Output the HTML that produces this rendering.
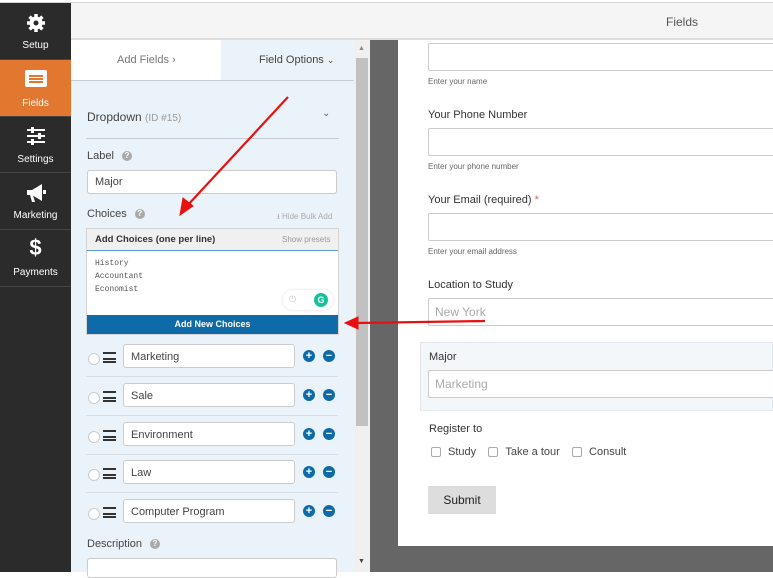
<!DOCTYPE html><html><head><style>
*{box-sizing:border-box;margin:0;padding:0}
body{width:773px;height:572px;overflow:hidden;background:#fff;font-family:"Liberation Sans",sans-serif;position:relative}
.a{position:absolute}
.sb{left:0;top:3px;width:71px;height:569px;background:#2b2b2b}
.si{position:absolute;left:0;width:71px;color:#fff;font-size:10px;text-align:center;border-bottom:1px solid #444}
.lbl{font-size:11px;color:#444}
.inp{position:absolute;background:#fff;border:1px solid #ccc;border-radius:3px;font-size:11px;color:#444;padding-left:7px}
.fl{font-size:11px;color:#333}
.hint{font-size:8px;color:#666}
.fi{position:absolute;left:428px;width:360px;height:28px;background:#fff;border:1px solid #ccc;border-radius:2px}
.q{display:inline-block;width:10px;height:10px;border-radius:50%;background:#aaa;color:#fff;font-size:8px;text-align:center;line-height:10px;font-weight:bold;vertical-align:middle;margin-left:8px}
.row{position:absolute;left:86px;width:252px;height:39px;border-bottom:1px solid #d6dde3}
.rad{position:absolute;left:2px;top:15px;width:12px;height:12px;border:1px solid #ccc;border-radius:50%;background:#fff}
.ham{position:absolute;left:17px;top:14px;width:13px;height:11px;border-top:2px solid #333;border-bottom:2px solid #333}
.ham:after{content:"";position:absolute;left:0;top:3.5px;width:13px;height:2px;background:#333}
.rin{position:absolute;left:37px;top:6px;width:172px;height:24px;background:#fff;border:1px solid #ccc;border-radius:3px;font-size:11px;color:#444;padding:6px 0 0 7px}
.pm{position:absolute;top:12px;width:12px;height:12px;border-radius:50%;background:#0e6ba8;color:#fff;font-size:11px;font-weight:bold;line-height:12px;text-align:center}
.cb{display:inline-block;width:10px;height:10px;border:1px solid #aaa;border-radius:2px;vertical-align:middle;margin-right:7px}
</style></head><body>
<div class="a" style="left:0;top:0;width:773px;height:3px;background:#fff;border-bottom:1px solid #d4d4d4"></div>
<div class="a" style="left:71px;top:3px;width:702px;height:37px;background:#f5f5f5;border-bottom:2px solid #ddd"></div>
<div class="a" style="left:666px;top:15px;font-size:12px;color:#555">Fields</div>
<div class="a sb"></div>
<div class="si" style="top:3px;height:57px"><svg width="20" height="20" viewBox="0 0 20 20" style="margin-top:10px"><circle cx="10" cy="10" r="6.5" fill="#fff"/><g stroke="#fff" stroke-width="3.5"><line x1="10" y1="1" x2="10" y2="19"/><line x1="1" y1="10" x2="19" y2="10"/><line x1="3.6" y1="3.6" x2="16.4" y2="16.4"/><line x1="16.4" y1="3.6" x2="3.6" y2="16.4"/></g><circle cx="10" cy="10" r="2.5" fill="#2b2b2b"/></svg><div style="margin-top:4px">Setup</div></div>
<div class="si" style="top:60px;height:57px;background:#e27730"><div style="margin:10px auto 0;width:22px;height:17px;border:2px solid #fff;border-radius:2px;background:#fff;padding:3px 2px"><div style="height:9px;background:repeating-linear-gradient(#e27730 0 2px,#fff 2px 3px)"></div></div><div style="margin-top:11px">Fields</div></div>
<div class="si" style="top:117px;height:56px"><svg width="20" height="18" style="margin-top:10px"><g fill="#fff"><rect x="1" y="2" width="18" height="2"/><rect x="1" y="8" width="18" height="2"/><rect x="1" y="14" width="18" height="2"/><rect x="5" y="0" width="3" height="6"/><rect x="12" y="6" width="3" height="6"/><rect x="5" y="12" width="3" height="6"/></g></svg><div style="margin-top:6px">Settings</div></div>
<div class="si" style="top:173px;height:57px"><svg width="22" height="20" style="margin-top:10px"><path d="M2 7h5l10-6v17L7 12H2z" fill="#fff"/><path d="M5 12l2 7h3l-2-7z" fill="#fff"/><rect x="18" y="7" width="3" height="4" fill="#fff"/></svg><div style="margin-top:4px">Marketing</div></div>
<div class="si" style="top:230px;height:57px"><div style="font-size:22px;font-weight:bold;margin-top:6px;line-height:24px">$</div><div style="margin-top:7px">Payments</div></div>
<div class="a" style="left:71px;top:40px;width:283px;height:532px;background:#ebf3fa"></div>
<div class="a" style="left:71px;top:40px;width:150px;height:41px;background:#fff;border-bottom:1px solid #c5ccd2"></div>
<div class="a" style="left:221px;top:40px;width:133px;height:41px;border-bottom:1px solid #c5ccd2"></div>
<div class="a" style="left:117px;top:54px;font-size:11px;color:#777">Add Fields &#8250;</div>
<div class="a" style="left:259px;top:54px;font-size:11px;color:#444">Field Options <span style="font-size:9px">&#8964;</span></div>
<div class="a" style="left:354px;top:40px;width:16px;height:532px;background:#f0f0f0"></div>
<div class="a" style="left:356px;top:58px;width:12px;height:368px;background:#c1c1c1"></div>
<div class="a" style="left:358px;top:45px;font-size:7px;color:#888">&#9650;</div>
<div class="a" style="left:358px;top:558px;font-size:7px;color:#444">&#9660;</div>
<div class="a" style="left:87px;top:110px;font-size:12px;color:#444">Dropdown <span style="font-size:10px;color:#999">(ID #15)</span></div>
<div class="a" style="left:322px;top:108px;font-size:10px;color:#666">&#8964;</div>
<div class="a" style="left:86px;top:138px;width:253px;height:1px;background:#c5ccd2"></div>
<div class="a lbl" style="left:87px;top:150px">Label<span class="q">?</span></div>
<div class="inp" style="left:87px;top:170px;width:250px;height:24px;padding-top:5px">Major</div>
<div class="a lbl" style="left:87px;top:208px">Choices<span class="q">?</span></div>
<div class="a" style="left:277px;top:211px;font-size:8px;color:#aaa">&#11123; Hide Bulk Add</div>
<div class="a" style="left:86px;top:228px;width:253px;height:107px;border:1px solid #d4d4d4;background:#f0f0f0"></div>
<div class="a" style="left:95px;top:234px;font-size:9.5px;font-weight:bold;color:#333">Add Choices (one per line)</div>
<div class="a" style="left:282px;top:235px;font-size:8px;color:#999">Show presets</div>
<div class="a" style="left:87px;top:250px;width:251px;height:65px;background:#fff;border-top:1px solid #5b9dd9;font-family:'Liberation Mono',monospace;font-size:8px;color:#555;padding:6px 8px;line-height:13px">History<br>Accountant<br>Economist</div>
<div class="a" style="left:283px;top:290px;width:50px;height:20px;border-radius:10px;background:#fff;box-shadow:0 0 3px #ddd"></div>
<div class="a" style="left:289px;top:294px;font-size:9px;color:#ccc">&#9211;</div>
<div class="a" style="left:314px;top:293px;width:14px;height:14px;border-radius:50%;background:#15c39a;color:#fff;font-size:9px;font-weight:bold;text-align:center;line-height:14px">G</div>
<div class="a" style="left:87px;top:315px;width:251px;height:19px;background:#0e6ba8;color:#fff;font-size:9px;font-weight:bold;text-align:center;line-height:19px">Add New Choices</div>
<div class="row" style="top:338px"><div class="rad"></div><div class="ham"></div><div class="rin">Marketing</div><div class="pm" style="left:217px">+</div><div class="pm" style="left:237px">&#8722;</div></div>
<div class="row" style="top:377px"><div class="rad"></div><div class="ham"></div><div class="rin">Sale</div><div class="pm" style="left:217px">+</div><div class="pm" style="left:237px">&#8722;</div></div>
<div class="row" style="top:416px"><div class="rad"></div><div class="ham"></div><div class="rin">Environment</div><div class="pm" style="left:217px">+</div><div class="pm" style="left:237px">&#8722;</div></div>
<div class="row" style="top:454px"><div class="rad"></div><div class="ham"></div><div class="rin">Law</div><div class="pm" style="left:217px">+</div><div class="pm" style="left:237px">&#8722;</div></div>
<div class="row" style="top:493px;border-bottom:none"><div class="rad"></div><div class="ham"></div><div class="rin">Computer Program</div><div class="pm" style="left:217px">+</div><div class="pm" style="left:237px">&#8722;</div></div>
<div class="a lbl" style="left:87px;top:538px">Description<span class="q">?</span></div>
<div class="inp" style="left:87px;top:558px;width:250px;height:20px"></div>
<div class="a" style="left:370px;top:40px;width:403px;height:532px;background:#666"></div>
<div class="a" style="left:398px;top:40px;width:375px;height:506px;background:#fff"></div>
<div class="fi" style="top:43px"></div>
<div class="a hint" style="left:428px;top:77px">Enter your name</div>
<div class="a fl" style="left:428px;top:109px">Your Phone Number</div>
<div class="fi" style="top:128px"></div>
<div class="a hint" style="left:428px;top:162px">Enter your phone number</div>
<div class="a fl" style="left:428px;top:194px">Your Email (required)<span style="color:#e55"> *</span></div>
<div class="fi" style="top:213px"></div>
<div class="a hint" style="left:428px;top:247px">Enter your email address</div>
<div class="a fl" style="left:428px;top:279px">Location to Study</div>
<div class="fi" style="top:298px;font-size:12px;color:#aaa;padding:6px 0 0 6px">New York</div>
<div class="a" style="left:420px;top:342px;width:353px;height:69px;background:#f4f7fa;border:1px solid #e2e8ee"></div>
<div class="a fl" style="left:429px;top:351px">Major</div>
<div class="fi" style="top:370px;font-size:12px;color:#aaa;padding:6px 0 0 6px">Marketing</div>
<div class="a fl" style="left:429px;top:423px">Register to</div>
<div class="a" style="left:431px;top:446px;font-size:11px;color:#444"><span class="cb"></span>Study&nbsp;&nbsp;&nbsp;&nbsp;<span class="cb"></span>Take a tour&nbsp;&nbsp;&nbsp;&nbsp;<span class="cb"></span>Consult</div>
<div class="a" style="left:428px;top:486px;width:68px;height:28px;background:#ddd;font-size:12px;color:#222;text-align:center;line-height:28px">Submit</div>
<svg class="a" style="left:0;top:0" width="773" height="572">
<g stroke="#e81010" stroke-width="2.2" fill="#e81010">
<line x1="288" y1="97" x2="186" y2="207"/>
<polygon points="180,215 183,198 193,206" stroke-width="1"/>
<line x1="485" y1="321" x2="356" y2="323"/>
<polygon points="345,323 358,317 358,329" stroke-width="1"/>
</g></svg>
</body></html>
